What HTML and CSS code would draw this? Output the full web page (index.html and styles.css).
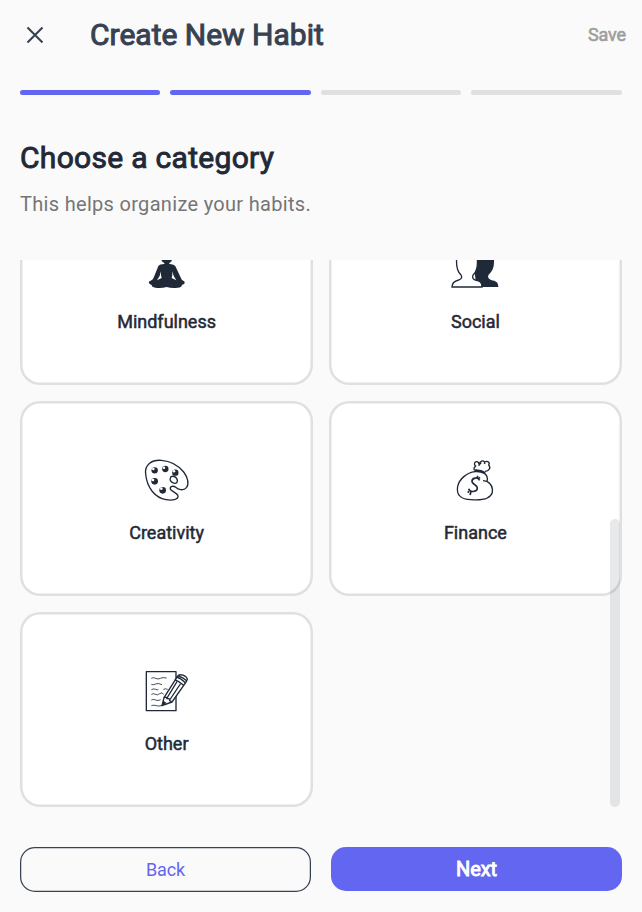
FILE: index.html
```html
<!DOCTYPE html>
<html lang="en">
<head>
<meta charset="utf-8">
<title>Create New Habit</title>
<link rel="stylesheet" href="styles.css">
</head>
<body>
<header class="topbar">
  <button class="close" aria-label="Close"><svg width="18" height="18" viewBox="0 0 18 18"><path d="M1.5 1.5 16.5 16.5M16.5 1.5 1.5 16.5"/></svg></button>
  <h1 class="title">Create New Habit</h1>
  <button class="save">Save</button>
</header>
<div class="steps"><i class="step done"></i><i class="step done"></i><i class="step"></i><i class="step"></i></div>
<section class="intro">
  <h2 class="heading">Choose a category</h2>
  <p class="hint">This helps organize your habits.</p>
</section>
<main class="scroller">
  <div class="grid">
    <div class="card">
      <svg class="icon" viewBox="129 -15 144 144"><circle cx="200" cy="12" r="17" fill="currentColor"/><path fill="currentColor" d="M184 28H215V34L208 39V42Q222 42 227 50L241 80Q245 91 250 92Q256 94 253 101Q250 104 246 104Q245 113 233 113Q215 115 200 111Q184 115 166 113Q155 112 155 105Q150 104 147 100Q145 93 152 92Q159 90 163 78L175 48Q179 42 193 42V39Q184 35 184 28Z"/><path fill="#fff" d="M183 64Q182 76 185 84L171 91Q181 78 183 64ZM217 64Q218 76 215 84L229 91Q219 78 217 64Z"/></svg>
      <span class="label">Mindfulness</span>
    </div>
    <div class="card">
      <svg class="icon" viewBox="64 -15 144 144"><path fill="currentColor" d="M130 20Q142-8 164-8C190-8 194 18 193 37C193 54 187 66 177 74Q171 85 184 90C199 93 206 97 206 111H140Z"/><path fill="#fff" stroke="currentColor" stroke-width="4" d="M81 25C84-6 139-6 143 25C145 51 141 65 131 74Q125 86 137 90C151 93 157 97 157 111H67C67 97 75 93 87 90Q100 86 94 75C84 66 79 51 81 25Z"/></svg>
      <span class="label">Social</span>
    </div>
    <div class="card">
      <svg class="icon" viewBox="39 18 144 144"><path class="line" d="M47 72C43 44 65 29 94 31C121 33 145 46 161 66C173 82 178 101 170 112C160 124 144 119 137 112C130 106 119 109 121 117C123 125 142 127 144 138C145 149 126 152 108 149C76 143 51 115 47 72Z"/><path class="line" d="M121 84C123 76 134 78 139 84C145 92 142 101 134 100C125 99 118 92 121 84Z"/><g fill="currentColor"><circle cx="74" cy="61" r="9.5"/><circle cx="106" cy="57" r="9.5"/><circle cx="136" cy="68" r="9.5"/><circle cx="74" cy="94" r="10"/><circle cx="98" cy="121" r="10"/></g><g fill="#fff"><circle cx="70" cy="57" r="3.8"/><circle cx="102" cy="53" r="3.8"/><circle cx="132" cy="64" r="3.8"/><circle cx="69" cy="90" r="4"/><circle cx="94" cy="116" r="4"/></g></svg>
      <span class="label">Creativity</span>
    </div>
    <div class="card">
      <svg class="icon" viewBox="34 18 144 144"><path class="line" d="M105 62C100 56 105 50 108 49C101 42 105 34 112 35C117 36 118 40 118 43C121 34 130 29 134 36C145 31 152 39 147 45C155 53 148 64 136 64M125 39Q120 40 117 47M137 38 133 41"/><path d="M106 58Q124 57 138 66L135 73Q120 65 105 67Z" fill="currentColor"/><path class="line" d="M106 65C81 68 59 87 54 109C49 135 64 148 94 149C133 152 153 145 158 127C160 112 154 101 142 94C145 84 141 74 132 68M142 94 130 92"/><path fill="none" stroke="currentColor" stroke-width="5" d="M120 91C114 79 96 84 97 95C98 104 113 103 113 114C113 126 91 129 87 116M111 85 115 78M94 125 91 135M116 86 121 82M88 124 84 128"/></svg>
      <span class="label">Finance</span>
    </div>
    <div class="card">
      <svg class="icon" viewBox="39 21 144 144"><path class="line" d="M49 35H138V152H49Z"/><path class="thin" stroke="currentColor" d="M64 55Q70 51 77 55T91 55T110 54M64 73Q71 76 77 72T96 74M64 89Q71 85 77 88T85 88M100 88Q106 85 113 88M64 103Q70 99 76 103T89 101T101 103M64 120Q70 116 77 120T92 119M64 137Q72 134 79 137T98 136"/><path fill="#fff" class="line" d="M96 137 102 113 142 50C148 38 170 47 172 58L167 68 126 126Z"/><path class="line" d="M134 59Q148 64 161 76M139 51Q151 54 166 68M111 114 141 65M119 120 151 72M102 113Q108 109 111 116Q119 114 119 122L126 126"/><path fill="currentColor" d="M96 137 100 122 110 129Z"/><path class="line" d="M145 48Q159 52 170 62"/></svg>
      <span class="label">Other</span>
    </div>
  </div>
  <div class="thumb"></div>
</main>
<footer class="actions"><button class="btn back">Back</button><button class="btn next">Next</button></footer>
</body>
</html>
```

FILE: styles.css
```css
* { box-sizing: border-box; }
body { margin: 0; height: 912px; overflow: hidden; display: flex; flex-direction: column; background: #fafafa; color: #1f2937; font-family: Roboto, sans-serif; }
button { border: 0; padding: 0; background: none; font: inherit; }
h1, h2, p { margin: 0; font-weight: 400; white-space: nowrap; }
.topbar { height: 70px; display: flex; align-items: center; padding: 0 16px 0 26px; color: #374151; }
.close { width: 18px; height: 18px; color: #374151; }
.close svg { display: block; fill: none; stroke: currentColor; stroke-width: 2.1; }
.title { margin-left: 46px; flex: 1; font-size: 30px; line-height: 36px; -webkit-text-stroke: 1px; }
.save { font-size: 18px; line-height: 24px; letter-spacing: -.1px; color: #9e9e9e; -webkit-text-stroke: .6px; }
.steps { display: flex; gap: 10px; height: 5px; margin: 20px 20px 0; }
.step { width: 140.4px; border-radius: 3px; background: #e0e0e0; }
.step:last-child { flex: 1; }
.step.done { background: #6366f1; }
.intro { height: 165px; padding: 43px 20px 0; }
.heading { font-size: 30px; line-height: 40px; letter-spacing: .3px; -webkit-text-stroke: .9px; }
.hint { margin-top: 12px; font-size: 20px; line-height: 28px; letter-spacing: .31px; color: #757575; }
.scroller { position: relative; height: 547px; margin: 0 20px; overflow: hidden; }
.grid { margin-top: -70.3px; display: grid; grid-template-columns: 1fr 1fr; grid-auto-rows: 195.5px; gap: 15.5px 15.6px; }
.card { display: flex; flex-direction: column; align-items: center; padding-top: 55.3px; border-radius: 20px; background: #fff; box-shadow: inset 0 0 0 2.5px #e0e0e0; }
.icon { width: 48px; height: 48px; }
.line { fill: none; stroke: currentColor; stroke-width: 4; stroke-linejoin: round; }
path.line[fill] { fill: #fff; }
.thin { fill: none; stroke-width: 2.5; }
.label { margin-top: 17px; font-size: 18px; line-height: 24px; -webkit-text-stroke: .5px; }
.thumb { position: absolute; right: 2px; bottom: 0; width: 10.4px; height: 288px; border-radius: 5px; background: rgba(31, 41, 55, .1); }
.actions { display: flex; gap: 20px; margin: 40px 20px 0; }
.btn { flex: 0 0 291px; height: 45px; border-radius: 15px; font-size: 18px; }
.back { box-shadow: inset 0 0 0 1.25px #374151; color: #6366f1; letter-spacing: -.1px; }
.next { height: 44px; margin-top: .4px; background: #6366f1; color: #fff; font-size: 20px; letter-spacing: -.1px; -webkit-text-stroke: .9px; }
```
